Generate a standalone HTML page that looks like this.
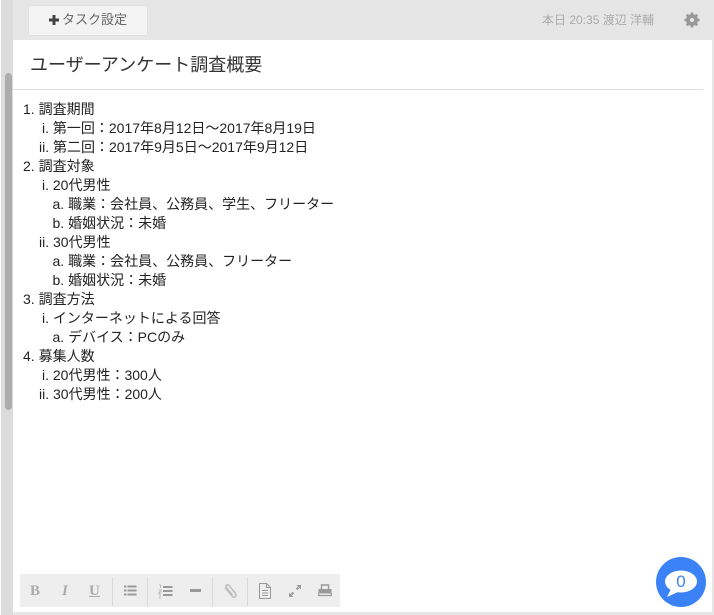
<!DOCTYPE html>
<html><head><meta charset="utf-8">
<style>
html,body{margin:0;padding:0;width:714px;height:615px;overflow:hidden;background:#e6e6e6;font-family:"Liberation Sans","Noto Sans CJK JP",sans-serif;color:#222}
div{position:absolute;box-sizing:border-box}
.l{font-size:14px;line-height:19px;height:19px;white-space:nowrap;color:#222}
.sep{top:577px;width:1px;height:29px;background:#d9d9d9}
svg{position:absolute}
</style></head><body>
<div style="left:0;top:0;width:13px;height:615px;background:#dcdcdc"></div>
<div style="left:0;top:0;width:1px;height:615px;background:#fff"></div>
<div style="left:5px;top:73px;width:7px;height:337px;background:#adadad;border-radius:4px"></div>
<div style="left:13px;top:0;width:701px;height:40px;background:#e6e6e6"></div>
<div style="left:28px;top:5px;width:120px;height:31px;background:#f3f3f3;border:1px solid #e0e0e0;border-radius:3px"></div>
<svg style="left:49px;top:15px" width="10" height="10" viewBox="0 0 10 10"><path d="M5 0v10M0 5h10" stroke="#444" stroke-width="3"/></svg>
<div style="left:62px;top:11px;font-size:13px;line-height:18px;color:#666;white-space:nowrap">タスク設定</div>
<div style="left:542px;top:13px;font-size:12px;line-height:15px;color:#aaa;white-space:nowrap">本日 20:35 渡辺 洋輔</div>
<svg style="left:684px;top:12px" width="16" height="16" viewBox="0 0 16 16"><circle cx="8" cy="8" r="4" fill="none" stroke="#999" stroke-width="3.800"/><path d="M8 .5v15M.5 8h15M2.800 2.800l10.400 10.400M13.200 2.800L2.800 13.200" stroke="#999" stroke-width="2.800"/><circle cx="8" cy="8" r="2" fill="#e6e6e6"/></svg>
<div style="left:13px;top:40px;width:699px;height:572px;background:#fff"></div>
<div style="left:30px;top:52px;font-size:18px;line-height:26px;color:#333;white-space:nowrap">ユーザーアンケート調査概要</div>
<div style="left:13px;top:89px;width:690px;height:1px;background:#dedede"></div>

<div class="l" style="left:23px;top:100px">1. 調査期間</div>
<div class="l" style="left:42px;top:119px">i. 第一回：2017年8月12日～2017年8月19日</div>
<div class="l" style="left:39px;top:138px">ii. 第二回：2017年9月5日～2017年9月12日</div>
<div class="l" style="left:23px;top:157px">2. 調査対象</div>
<div class="l" style="left:42px;top:176px">i. 20代男性</div>
<div class="l" style="left:52.500px;top:195px">a. 職業：会社員、公務員、学生、フリーター</div>
<div class="l" style="left:52.500px;top:214px">b. 婚姻状況：未婚</div>
<div class="l" style="left:39px;top:233px">ii. 30代男性</div>
<div class="l" style="left:52.500px;top:252px">a. 職業：会社員、公務員、フリーター</div>
<div class="l" style="left:52.500px;top:271px">b. 婚姻状況：未婚</div>
<div class="l" style="left:23px;top:290px">3. 調査方法</div>
<div class="l" style="left:42px;top:309px">i. インターネットによる回答</div>
<div class="l" style="left:52.500px;top:328px">a. デバイス：PCのみ</div>
<div class="l" style="left:23px;top:347px">4. 募集人数</div>
<div class="l" style="left:42px;top:366px">i. 20代男性：300人</div>
<div class="l" style="left:39px;top:385px">ii. 30代男性：200人</div>

<div style="left:20px;top:574px;width:320px;height:33px;background:#eeeeee"></div>
<div style="left:30px;top:582px;font:bold 15px/18px 'Liberation Serif',serif;color:#aaa">B</div>
<div style="left:62px;top:582px;font:italic bold 15px/18px 'Liberation Serif',serif;color:#aaa">I</div>
<div style="left:89px;top:582px;font:bold 15px/18px 'Liberation Serif',serif;color:#aaa;text-decoration:underline">U</div>
<div class="sep" style="left:112px"></div>
<svg style="left:123px;top:585px" width="14" height="12" viewBox="0 0 14 12"><path d="M1 1.500h2.500M1 5.500h2.500M1 9.500h2.500M4.500 1.500h9M4.500 5.500h9M4.500 9.500h9" stroke="#999" stroke-width="2"/></svg>
<div class="sep" style="left:147px"></div>
<svg style="left:158px;top:584px" width="15" height="15" viewBox="0 0 15 15"><path d="M1 1h1.500v3M1 6h2v2H1v2h2M1 12h2M1 14h2" stroke="#aaa" stroke-width=".8" fill="none"/><path d="M5 3h9.500M5 7h9.500M5 11h9.500" stroke="#999" stroke-width="2"/></svg>
<div style="left:190px;top:589px;width:11px;height:3px;background:#999"></div>
<div class="sep" style="left:212px"></div>
<svg style="left:223px;top:583px" width="15" height="16" viewBox="0 0 15 16"><path d="M2 4.500l7.500 9c2 2 4.500-.5 3-3L6 2.500C4.500 1 2 2.500 3.500 5l6 7" fill="none" stroke="#bbb" stroke-width="1.500"/></svg>
<div class="sep" style="left:247px"></div>
<svg style="left:258px;top:583px" width="14" height="16" viewBox="0 0 14 16"><path d="M1.500.500h7l4 4v11h-11zM8.500.500v4h4M4 7.500h6M4 10h6M4 12.500h6" fill="none" stroke="#999" stroke-width="1"/></svg>
<svg style="left:289px;top:585px" width="12" height="12" viewBox="0 0 12 12"><path d="M7.500 0H12v4.500zM0 7.500V12h4.500z" fill="#999"/><path d="M9.500 2.500L7.500 4.500M4.500 7.500L2.500 9.500" stroke="#999" stroke-width="2"/></svg>
<svg style="left:318px;top:584px" width="14" height="14" viewBox="0 0 14 14"><path d="M3.500 5V1h7v4" fill="none" stroke="#999" stroke-width="1.400"/><path d="M.5 5h13v4.500H.5z" fill="#999"/><path d="M.8 9v2.500h12.400V9" fill="none" stroke="#999" stroke-width="1.200"/></svg>

<div style="left:656px;top:557px;width:50px;height:50px;border-radius:50%;background:#3b82f6"></div>
<svg style="left:664px;top:570px" width="34" height="30" viewBox="0 0 34 30"><ellipse cx="17" cy="11.500" rx="16" ry="11" fill="#fff"/><path d="M8 17L3 27l11-5z" fill="#fff"/></svg>
<div style="left:656px;top:571px;width:50px;text-align:center;font-size:17px;line-height:22px;color:#3b82f6">0</div>
</body></html>
